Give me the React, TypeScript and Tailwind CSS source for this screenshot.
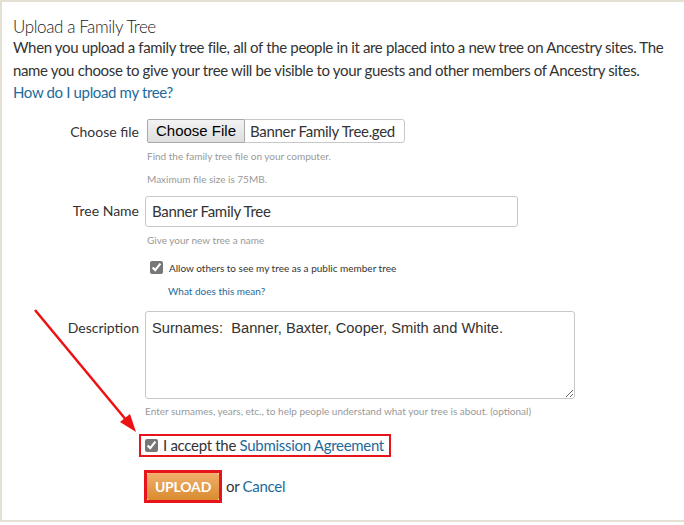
import React from 'react'

const sans = { fontFamily: 'Lato, "Noto Sans", sans-serif' }

function Row({ label, children, labelTop = 'pt-0' }: { label: string; children: React.ReactNode; labelTop?: string }) {
    return (
        <div className='flex'>
            <div className={`w-[132px] shrink-0 text-right pr-[6px] text-[14px] text-[#333] ${labelTop}`}>{label}</div>
            <div className='flex-1'>{children}</div>
        </div>
    )
}

export default function App() {
    return (
        <div className='relative w-[684px] h-[525px] bg-white overflow-hidden' style={sans}>
            <div className='w-[684px] h-[522px] border-t-2 border-l-2 border-b-2 border-[#e4e1d3] px-[11px] pt-[13px]'>
                <h1 className='text-[17px] font-light text-[#222] leading-[24px] tracking-[-0.4px]'>Upload a Family Tree</h1>
                <p className='text-[15px] text-[#333] leading-[23px] mt-[-3px] tracking-[-0.35px]'>
                    When you upload a family tree file, all of the people in it are placed into a new tree on Ancestry sites. The name you choose to give your tree will be visible to your guests and other members of Ancestry sites.
                </p>
                <a className='block text-[15px] text-[#1e6a9b] leading-[20px] tracking-[-0.35px]'>How do I upload my tree?</a>

                <div className='mt-[17px]'>
                    <Row label='Choose file' labelTop='pt-[2px]'>
                        <div className='flex items-center w-[258px] h-[24px] border border-[#c8c8c8] rounded-[3px] ml-[2px]'>
                            <div className='h-[24px] px-[8px] -ml-px border border-[#a9a9a9] rounded-[2px] bg-gradient-to-b from-[#f3f3f3] to-[#dedede] text-[15px] text-black leading-[22px]' style={{ fontFamily: '"Liberation Sans", Arial, sans-serif' }}>Choose File</div>
                            <span className='pl-[5px] text-[15px] text-[#333] tracking-[-0.3px]'>Banner Family Tree.ged</span>
                        </div>
                        <div className='ml-[2px] mt-[7px] text-[10px] text-[#999] leading-[12px]'>Find the family tree file on your computer.</div>
                        <div className='ml-[2px] mt-[11px] text-[10px] text-[#999] leading-[12px]'>Maximum file size is 75MB.</div>
                    </Row>
                </div>

                <div className='mt-[11px]'>
                    <Row label='Tree Name' labelTop='pt-[4px]'>
                        <div className='w-[373px] h-[31px] border border-[#c8c8c8] rounded-[3px] px-[6px] flex items-center text-[15px] text-[#333] tracking-[-0.3px]'>Banner Family Tree</div>
                        <div className='ml-[2px] mt-[7px] text-[10px] text-[#999] leading-[12px]'>Give your new tree a name</div>
                        <label className='ml-[5px] mt-[15px] flex items-center gap-[6px]'>
                            <input type='checkbox' defaultChecked className='w-[13px] h-[13px] m-0 accent-[#777]' />
                            <span className='text-[10px] text-[#333] leading-[12px]'>Allow others to see my tree as a public member tree</span>
                        </label>
                        <a className='block ml-[23px] mt-[11px] text-[10px] text-[#1e6a9b] leading-[12px]'>What does this mean?</a>
                    </Row>
                </div>

                <div className='mt-[14px]'>
                    <Row label='Description' labelTop='pt-[6px]'>
                        <textarea
                            defaultValue='Surnames:  Banner, Baxter, Cooper, Smith and White.'
                            className='block w-[430px] h-[88px] border border-[#c8c8c8] rounded-[3px] px-[6px] pt-[5px] text-[14.7px] text-[#333] outline-none'
                            style={{ fontFamily: '"Liberation Sans", Arial, sans-serif' }}
                        />
                        <div className='mt-[6px] text-[10px] text-[#999] leading-[12px]'>Enter surnames, years, etc., to help people understand what your tree is about. (optional)</div>
                    </Row>
                </div>

                <div className='ml-[126px] mt-[17px]'>
                    <div className='inline-flex items-center gap-[5px] border-2 border-[#e8141c] h-[23px] pl-[4px] pr-[5px]'>
                        <input type='checkbox' defaultChecked className='w-[13px] h-[13px] m-0 accent-[#777]' />
                        <span className='text-[15px] text-[#333] tracking-[-0.3px]'>I accept the <a className='text-[#1e6a9b]'>Submission Agreement</a></span>
                    </div>
                    <div className='flex items-center mt-[12px] ml-[5px]'>
                        <div className='border-[3px] border-[#e8141c] p-0'>
                            <button className='w-[72px] h-[27px] bg-gradient-to-b from-[#f0b06c] to-[#d98b2c] rounded-[2px] text-white text-[14px] font-bold tracking-[-0.2px]'>UPLOAD</button>
                        </div>
                        <span className='ml-[4px] text-[15px] text-[#333] tracking-[-0.3px]'>or <a className='text-[#1e6a9b]'>Cancel</a></span>
                    </div>
                </div>
            </div>

            <svg className='absolute left-0 top-0 pointer-events-none' width='684' height='525'>
                <line x1='35' y1='310' x2='127' y2='421' stroke='#ee1111' strokeWidth='2.5' />
                <polygon points='136,432 120,422 130,414' fill='#ee1111' />
            </svg>
        </div>
    )
}
